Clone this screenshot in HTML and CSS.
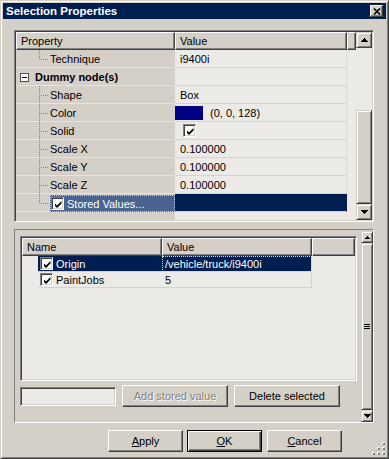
FILE: index.html
```html
<!DOCTYPE html>
<html>
<head>
	<meta http-equiv="Content-Type" content="text/html;charset=utf-8"/>
	<title>Selection Properties</title>
	<link rel="stylesheet" href="styles.css">
</head>
<body>
<div class="window">
	<div class="caption">
		<span class="caption-text">Selection Properties</span>
		<span class="caption-close">
			<svg width="8" height="7" viewBox="0 0 8 7"><path d="M1 0.5L7 6.5M7 0.5L1 6.5" stroke="#000" stroke-width="1.6"/></svg>
		</span>
	</div>
	<div class="dialog">
		<!-- property grid -->
		<div class="pgrid sunken">
			<div class="pg-main">
				<div class="pg-head">
					<div class="hcell">Property</div>
					<div class="hcell">Value</div>
					<div class="hcell"></div>
				</div>
				<div class="pg-row">
					<div class="pg-name"><span class="tree last"></span>Technique</div>
					<div class="pg-val">i9400i</div>
				</div>
				<div class="pg-row">
					<div class="pg-name group"><span class="toggle"></span>Dummy node(s)</div>
					<div class="pg-val"></div>
				</div>
				<div class="pg-row">
					<div class="pg-name"><span class="tree"></span>Shape</div>
					<div class="pg-val">Box</div>
				</div>
				<div class="pg-row">
					<div class="pg-name"><span class="tree"></span>Color</div>
					<div class="pg-val color"><span class="swatch"></span>(0, 0, 128)</div>
				</div>
				<div class="pg-row">
					<div class="pg-name"><span class="tree"></span>Solid</div>
					<div class="pg-val solid"><span class="check"><svg width="9" height="9" viewBox="0 0 9 9"><path d="M1 3.5L3 5.5 7.5 1V3.5L3 8 1 6z"/></svg></span></div>
				</div>
				<div class="pg-row">
					<div class="pg-name"><span class="tree"></span>Scale X</div>
					<div class="pg-val">0.100000</div>
				</div>
				<div class="pg-row">
					<div class="pg-name"><span class="tree"></span>Scale Y</div>
					<div class="pg-val">0.100000</div>
				</div>
				<div class="pg-row">
					<div class="pg-name"><span class="tree"></span>Scale Z</div>
					<div class="pg-val">0.100000</div>
				</div>
				<div class="pg-row">
					<div class="pg-name"><span class="tree last"></span><span class="sel-item"><span class="check"><svg width="9" height="9" viewBox="0 0 9 9"><path d="M1 3.5L3 5.5 7.5 1V3.5L3 8 1 6z"/></svg></span>Stored Values...</span></div>
					<div class="pg-val selected"></div>
				</div>
			</div>
			<div class="vscroll">
				<div class="sbtn"><svg width="7" height="4" viewBox="0 0 7 4"><path d="M3.5 0L7 4H0z"/></svg></div>
				<div class="strack"></div>
				<div class="sthumb"></div>
				<div class="sbtn"><svg width="7" height="4" viewBox="0 0 7 4"><path d="M0 0H7L3.5 4z"/></svg></div>
			</div>
		</div>

		<!-- stored values -->
		<div class="stored">
			<div class="stored-main">
				<div class="listview sunken">
					<div class="lv-head">
						<div class="hcell">Name</div>
						<div class="hcell">Value</div>
						<div class="hcell"></div>
					</div>
					<div class="lv-row">
						<div class="lv-name"><span class="lv-item sel"><span class="check"><svg width="9" height="9" viewBox="0 0 9 9"><path d="M1 3.5L3 5.5 7.5 1V3.5L3 8 1 6z"/></svg></span>Origin</span></div>
						<div class="lv-val focus">/vehicle/truck/i9400i</div>
					</div>
					<div class="lv-row">
						<div class="lv-name"><span class="lv-item"><span class="check"><svg width="9" height="9" viewBox="0 0 9 9"><path d="M1 3.5L3 5.5 7.5 1V3.5L3 8 1 6z"/></svg></span>PaintJobs</span></div>
						<div class="lv-val">5</div>
					</div>
				</div>
				<div class="tools">
					<div class="edit sunken"></div>
					<button class="btn wide" disabled>Add stored value</button>
					<button class="btn wide">Delete selected</button>
				</div>
			</div>
			<div class="vscroll slim">
				<div class="sbtn"><svg width="5" height="3" viewBox="0 0 5 3"><path d="M2.5 0L5 3H0z"/></svg></div>
				<div class="sthumb"><span class="grip"></span></div>
				<div class="sbtn"><svg width="7" height="4" viewBox="0 0 7 4"><path d="M0 0H7L3.5 4z"/></svg></div>
			</div>
		</div>

		<div class="actions">
			<button class="btn"><u>A</u>pply</button>
			<button class="btn default"><u>O</u>K</button>
			<button class="btn cancel"><u>C</u>ancel</button>
		</div>
	</div>
	<svg class="sizegrip" width="14" height="14" viewBox="0 0 14 14">
		<rect x="10" y="0" width="2" height="2" fill="#fff"/><rect x="11" y="1" width="2" height="2" fill="#808080"/>
		<rect x="5" y="5" width="2" height="2" fill="#fff"/><rect x="6" y="6" width="2" height="2" fill="#808080"/>
		<rect x="10" y="5" width="2" height="2" fill="#fff"/><rect x="11" y="6" width="2" height="2" fill="#808080"/>
		<rect x="0" y="10" width="2" height="2" fill="#fff"/><rect x="1" y="11" width="2" height="2" fill="#808080"/>
		<rect x="5" y="10" width="2" height="2" fill="#fff"/><rect x="6" y="11" width="2" height="2" fill="#808080"/>
		<rect x="10" y="10" width="2" height="2" fill="#fff"/><rect x="11" y="11" width="2" height="2" fill="#808080"/>
	</svg>
</div>
</body>
</html>
```

FILE: styles.css
```css
*{
	margin: 0;
	padding: 0;
	box-sizing: border-box;
}
body{
	font-family: "Liberation Sans", Arial, sans-serif;
	font-size: 11px;
	color: #000;
	background: #D4D0C8;
}
button{
	font: inherit;
	color: inherit;
}

/* window frame */
.window{
	width: 389px;
	height: 459px;
	position: relative;
	display: flex;
	flex-direction: column;
	padding: 2px;
	background: #D4D0C8;
	border: 1px solid;
	border-color: #D4D0C8 #404040 #404040 #D4D0C8;
	box-shadow: inset 1px 1px #fff, inset -1px -1px #808080;
}
.caption{
	height: 16px;
	display: flex;
	align-items: center;
	justify-content: space-between;
	padding: 0 3px 0 3px;
	background: #001E50;
	color: #fff;
}
.caption-text{
	font-weight: bold;
	font-size: 11.5px;
}
.caption-close{
	width: 13px;
	height: 12px;
	display: flex;
	align-items: center;
	justify-content: center;
	background: #D4D0C8;
	border: 1px solid;
	border-color: #fff #404040 #404040 #fff;
	box-shadow: inset -1px -1px #808080;
}
.dialog{
	flex: 1;
	display: flex;
	flex-direction: column;
	gap: 7px;
	padding: 11px 12px 0 11px;
}

/* shared 3d edges */
.sunken{
	border: 1px solid;
	border-color: #808080 #fff #fff #808080;
	box-shadow: inset 1px 1px #404040, inset -1px -1px #D4D0C8;
	padding: 1px;
}
.hcell{
	background: #D4D0C8;
	border: 1px solid;
	border-color: #fff #404040 #404040 #fff;
	box-shadow: inset -1px -1px #808080;
	padding-left: 4px;
	line-height: 16px;
	white-space: nowrap;
	overflow: hidden;
}
.check{
	width: 13px;
	height: 13px;
	flex: none;
	display: flex;
	align-items: center;
	justify-content: center;
	background: #fff;
	border: 1px solid;
	border-color: #808080 #fff #fff #808080;
	box-shadow: inset 1px 1px #404040, inset -1px -1px #D4D0C8;
	padding: 1px 0 0 1px;
}
.check svg{
	display: block;
	fill: #000;
}

/* property grid */
.pgrid{
	height: 192px;
	display: flex;
}
.pg-main{
	width: 340px;
	display: flex;
	flex-direction: column;
	background: linear-gradient(to right, #D4D0C8 159px, #ECEAE6 159px);
}
.pg-head{
	height: 18px;
	display: grid;
	grid-template-columns: 159px 172px 1fr;
}
.pg-row{
	height: 18px;
	display: grid;
	grid-template-columns: 159px 172px;
}
.pg-name{
	display: flex;
	align-items: center;
	padding-left: 23px;
	background: linear-gradient(#E6E3DE, #E6E3DE) left bottom / 100% 1px no-repeat;
	white-space: nowrap;
}
.pg-name.group{
	padding-left: 4px;
	font-weight: bold;
}
.toggle{
	width: 9px;
	height: 9px;
	margin-right: 6px;
	background: #fff linear-gradient(#000, #000) center / 5px 1px no-repeat;
	border: 1px solid #505050;
}
.tree{
	width: 10px;
	height: 18px;
	align-self: flex-start;
	margin-right: 1px;
	background:
		repeating-linear-gradient(to bottom, #808080 0 1px, transparent 1px 2px) left top / 1px 100% no-repeat,
		repeating-linear-gradient(to right, #808080 0 1px, transparent 1px 2px) 2px 9px / 8px 1px no-repeat;
}
.tree.last{
	background-size: 1px 10px, 8px 1px;
}
.sel-item{
	flex: 1;
	height: 17px;
	align-self: flex-start;
	margin-top: 1px;
	display: flex;
	align-items: center;
	gap: 3px;
	padding-left: 1px;
	background: #4A6390;
	color: #fff;
	outline: 1px dotted #D8D48C;
	outline-offset: -1px;
}
.pg-val{
	display: flex;
	align-items: center;
	padding-left: 5px;
	background: #ECEAE6;
	border-bottom: 1px solid #D6D3CE;
	border-right: 1px solid #DEDBD6;
	white-space: nowrap;
}
.pg-val.color{
	padding-left: 0;
}
.swatch{
	width: 28px;
	height: 14px;
	margin-right: 7px;
	background: #000080;
}
.pg-val.solid{
	padding-left: 8px;
}
.pg-val.selected{
	background: #001E50;
	border-right-color: #001E50;
}

/* scroll bars */
.vscroll{
	width: 16px;
	display: flex;
	flex-direction: column;
	background: #ECEAE6;
}
.sbtn, .sthumb{
	background: #D4D0C8;
	border: 1px solid;
	border-color: #D4D0C8 #404040 #404040 #D4D0C8;
	box-shadow: inset 1px 1px #fff, inset -1px -1px #808080;
}
.sbtn{
	height: 16px;
	display: flex;
	align-items: center;
	justify-content: center;
}
.sbtn svg{
	display: block;
	fill: #000;
	shape-rendering: crispEdges;
}
.strack{
	height: 62px;
}
.sthumb{
	flex: 1;
}
.vscroll.slim{
	width: 12px;
	margin-top: 1px;
	background: #D4D0C8;
}
.vscroll.slim .sbtn{
	height: 12px;
}
.vscroll.slim .sthumb{
	display: flex;
	align-items: center;
	justify-content: center;
}
.grip{
	width: 6px;
	height: 5px;
	border-top: 1px solid #000;
	border-bottom: 1px solid #000;
	background: linear-gradient(#000, #000) center / 6px 1px no-repeat;
}

/* stored values panel */
.stored{
	height: 194px;
	display: flex;
	border: 1px solid;
	border-color: #808080 #fff #fff #808080;
}
.stored-main{
	flex: 1;
	display: flex;
	flex-direction: column;
	padding: 6px 4px 0 5px;
}
.listview{
	height: 145px;
	background: #ECEAE6;
}
.lv-head{
	height: 18px;
	display: grid;
	grid-template-columns: 140px 150px 1fr;
}
.lv-row{
	height: 16px;
	display: grid;
	grid-template-columns: 140px 150px;
}
.lv-name{
	display: flex;
	padding-left: 16px;
}
.lv-item{
	flex: 1;
	display: flex;
	align-items: center;
	gap: 3px;
	padding-left: 2px;
	border-bottom: 1px solid #D6D3CE;
}
.lv-item.sel{
	background: #001E50;
	color: #fff;
}
.lv-val{
	display: flex;
	align-items: center;
	padding-left: 3px;
	border-bottom: 1px solid #D6D3CE;
	border-right: 1px solid #D6D3CE;
	white-space: nowrap;
}
.lv-val.focus{
	background: #001E50;
	color: #fff;
	outline: 1px dotted #E8E48C;
	outline-offset: -1px;
}
.tools{
	height: 22px;
	margin-top: 4px;
	display: flex;
	align-items: center;
	gap: 6px;
}
.edit{
	width: 96px;
	height: 19px;
	background: #ECEAE6;
}

/* buttons */
.btn{
	width: 75px;
	height: 22px;
	background: #D4D0C8;
	border: 1px solid;
	border-color: #fff #404040 #404040 #fff;
	box-shadow: inset -1px -1px #808080;
	cursor: pointer;
}
.btn.wide{
	width: 106px;
}
.btn:disabled{
	color: #808080;
	text-shadow: 1px 1px #fff;
	cursor: default;
}
.btn.default{
	border-color: #000;
	box-shadow: inset 1px 1px #fff, inset -1px -1px #404040, inset -2px -2px #808080;
}
.actions{
	height: 22px;
	display: flex;
	justify-content: flex-end;
	gap: 4px;
	padding-right: 32px;
}
.btn.cancel{
	margin-left: 1px;
}
.sizegrip{
	position: absolute;
	right: 2px;
	bottom: 2px;
}
```
